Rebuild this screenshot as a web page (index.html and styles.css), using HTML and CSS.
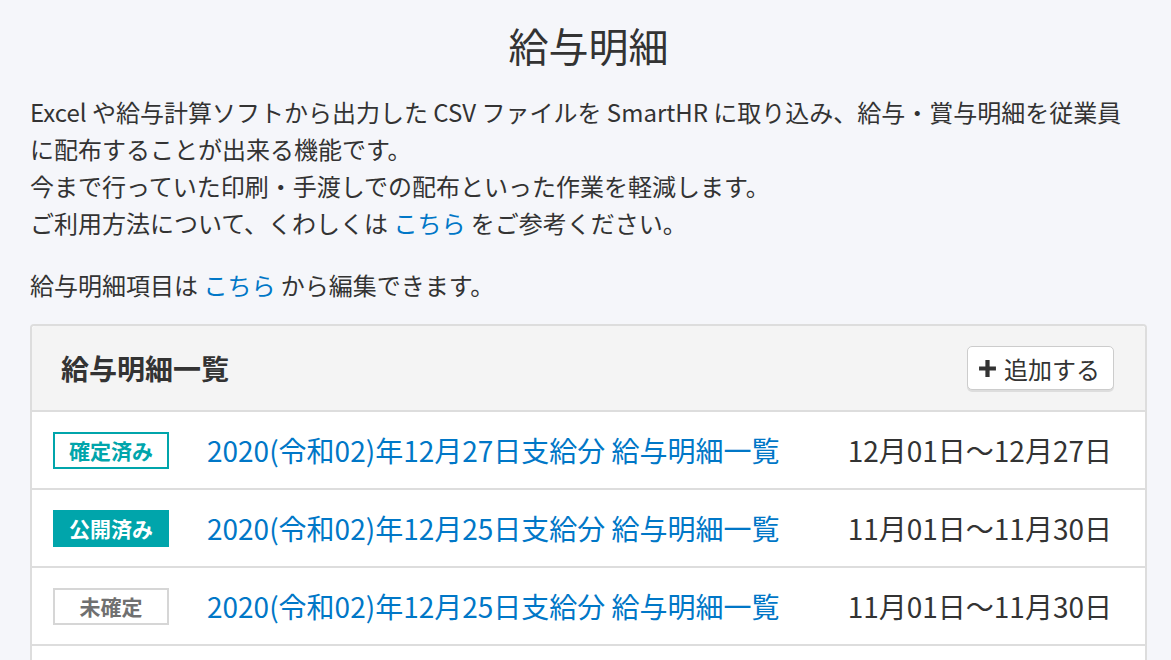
FILE: index.html
```html
<!DOCTYPE html>
<html lang="ja">
<head>
<meta charset="utf-8">
<title>給与明細</title>
<link rel="stylesheet" href="styles.css">
</head>
<body>
<main class="page">
  <h1 class="title">給与明細</h1>
  <p class="desc">Excel や給与計算ソフトから出力した CSV ファイルを SmartHR に取り込み、給与・賞与明細を従業員<br>に配布することが出来る機能です。<br>今まで行っていた印刷・手渡しでの配布といった作業を軽減します。<br>ご利用方法について、くわしくは <a class="link" href="#">こちら</a> をご参考ください。</p>
  <p class="desc desc-note">給与明細項目は <a class="link" href="#">こちら</a> から編集できます。</p>
  <section class="card">
    <header class="card-head">
      <h2 class="card-title">給与明細一覧</h2>
      <button class="add-btn"><svg class="plus" viewBox="0 0 18 18" width="19" height="19"><path d="M7 1h4v6h6v4h-6v6h-4v-6h-6v-4h6z" fill="#333"/></svg>追加する</button>
    </header>
    <ul class="rows">
      <li class="row">
        <span class="badge badge-fixed">確定済み</span>
        <a class="row-link" href="#">2020(令和02)年12月27日支給分 給与明細一覧</a>
        <span class="period">12月01日〜12月27日</span>
      </li>
      <li class="row">
        <span class="badge badge-public">公開済み</span>
        <a class="row-link" href="#">2020(令和02)年12月25日支給分 給与明細一覧</a>
        <span class="period">11月01日〜11月30日</span>
      </li>
      <li class="row">
        <span class="badge badge-draft">未確定</span>
        <a class="row-link" href="#">2020(令和02)年12月25日支給分 給与明細一覧</a>
        <span class="period">11月01日〜11月30日</span>
      </li>
      <li class="row"></li>
    </ul>
  </section>
</main>
</body>
</html>
```
FILE: styles.css
```css
html, body {
  margin: 0;
  padding: 0;
  background: #f5f6fa;
  color: #333;
  font-family: "Noto Sans CJK JP", "Noto Sans", sans-serif;
}
.page {
  padding: 15px 24px 0 30px;
}
.title {
  margin: 0;
  text-align: center;
  font-size: 40px;
  font-weight: normal;
  line-height: 60px;
}
.desc {
  margin: 18px 0 0;
  font-size: 24px;
  line-height: 37px;
}
.desc-note {
  margin-top: 25px;
}
.link {
  color: #0077c7;
  text-decoration: none;
}
.card {
  margin-top: 21px;
  background: #fff;
  border: 2px solid #ddd;
  border-radius: 4px;
}
.card-head {
  display: flex;
  align-items: center;
  justify-content: space-between;
  height: 84px;
  padding: 0 31px 0 29px;
  background: #f4f4f4;
  border-bottom: 2px solid #ddd;
  border-radius: 4px 4px 0 0;
}
.card-title {
  margin: 0;
  font-size: 28px;
  font-weight: bold;
}
.add-btn {
  display: flex;
  align-items: center;
  gap: 7px;
  height: 44px;
  padding: 0 13px 0 10px;
  background: #fff;
  border: 1px solid #ccc;
  border-radius: 5px;
  box-shadow: 0 2px 0 #ddd;
  font-family: inherit;
  font-size: 24px;
  color: #333;
}
.rows {
  list-style: none;
  margin: 0;
  padding: 0;
}
.row {
  display: flex;
  align-items: center;
  height: 76px;
  padding: 0 33px 0 21px;
  border-bottom: 2px solid #ddd;
}
.badge {
  box-sizing: border-box;
  width: 116px;
  height: 37px;
  display: flex;
  align-items: center;
  justify-content: center;
  font-size: 21px;
  font-weight: bold;
  flex: none;
}
.badge-fixed {
  border: 2px solid #00a5ab;
  color: #00a5ab;
}
.badge-public {
  background: #00a5ab;
  color: #fff;
}
.badge-draft {
  border: 2px solid #d6d6d6;
  color: #707070;
}
.row-link {
  margin-left: 38px;
  color: #0077c7;
  font-size: 28px;
  text-decoration: none;
}
.period {
  margin-left: auto;
  font-size: 28px;
  color: #333;
}
```
